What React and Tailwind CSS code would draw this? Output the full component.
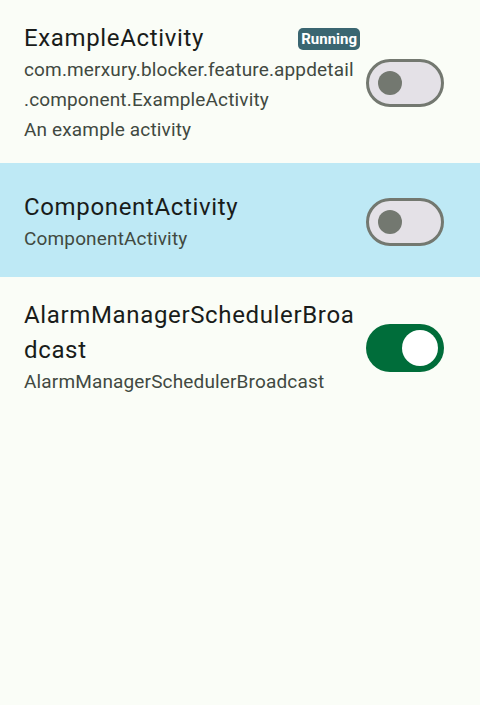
import React from "react";

function Switch({ checked }) {
  if (checked) {
    return (
      <div className="shrink-0 w-[78px] h-[48px] rounded-full bg-[#006d3a] flex items-center justify-end pr-[6px]">
        <div className="w-[36px] h-[36px] rounded-full bg-white" />
      </div>
    );
  }
  return (
    <div className="shrink-0 w-[78px] h-[48px] rounded-full bg-[#e4e1e7] border-[3px] border-[#737870] flex items-center pl-[9px]">
      <div className="w-[24px] h-[24px] rounded-full bg-[#737870]" />
    </div>
  );
}

function Row({ title, badge, lines, checked, highlight, minH }) {
  return (
    <div
      className={
        "flex items-center pl-[24px] pr-[36px] pt-[21px] pb-[18px] " +
        (highlight ? "bg-[#bee9f5] " : "") +
        (minH ? "min-h-[114px]" : "")
      }
    >
      <div className="flex-1 min-w-0 pr-[6px]">
        <div className="flex items-start justify-between">
          <div className="text-[24px] leading-[35px] tracking-[0.65px] text-[#191c1a]">{title}</div>
          {badge && (
            <div className="mt-[7px] shrink-0 h-[22px] px-[3px] rounded-[5px] bg-[#3a6671] text-white text-[15px] font-bold leading-[22px]">
              {badge}
            </div>
          )}
        </div>
        <div className="-mt-[1px]">
          {lines.map((l, i) => (
            <div key={i} className="text-[19px] leading-[30px] tracking-[0.15px] text-[#414941]">
              {l}
            </div>
          ))}
        </div>
      </div>
      <Switch checked={checked} />
    </div>
  );
}

export default function App() {
  return (
    <div
      className="w-[480px] h-[705px] bg-[#fafdf7] overflow-hidden"
      style={{ fontFamily: "Roboto, 'Noto Sans', sans-serif" }}
    >
      <Row
        title="ExampleActivity"
        badge="Running"
        lines={[
          <>com.merxury.blocker.feature.appdetail<wbr />.component.ExampleActivity</>,
          "An example activity",
        ]}
        checked={false}
      />
      <Row
        title="ComponentActivity"
        lines={["ComponentActivity"]}
        checked={false}
        highlight
        minH
      />
      <Row
        title={<>AlarmManagerSchedulerBroa<wbr />dcast</>}
        lines={["AlarmManagerSchedulerBroadcast"]}
        checked={true}
      />
    </div>
  );
}
